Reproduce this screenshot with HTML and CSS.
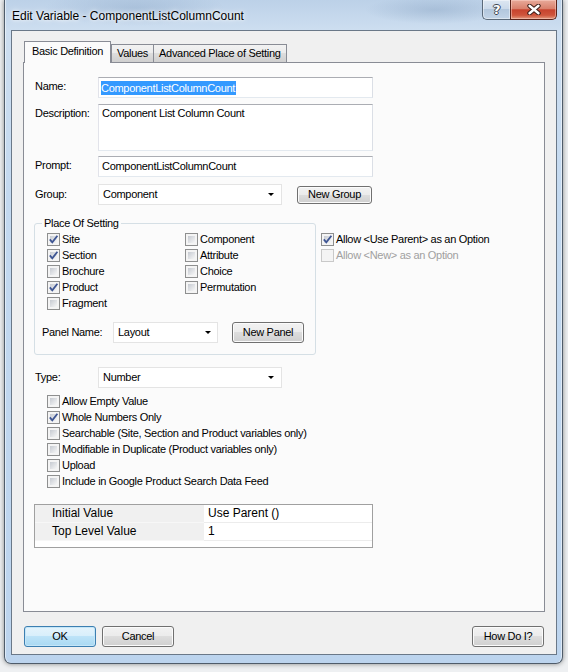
FILE: index.html
```html
<!DOCTYPE html>
<html>
<head>
<meta charset="utf-8">
<title>Edit Variable</title>
<link rel="stylesheet" href="styles.css">
</head>
<body>
<div class="window">
  <div class="titlebar">
    <span class="title">Edit Variable - ComponentListColumnCount</span>
    <div class="caption">
      <div class="cap-btn help"><span>?</span></div>
      <div class="cap-btn close">
        <svg width="14" height="11" viewBox="0 0 14 11"><path d="M2.5 1.8 L11.5 9.2 M11.5 1.8 L2.5 9.2" stroke="#3b1c16" stroke-width="4.4" stroke-linecap="round" fill="none"/><path d="M2.5 1.8 L11.5 9.2 M11.5 1.8 L2.5 9.2" stroke="#ffffff" stroke-width="2.4" stroke-linecap="round" fill="none"/></svg>
      </div>
    </div>
  </div>
  <div class="client">
    <div class="tabs">
      <div class="tab active">Basic Definition</div>
      <div class="tab">Values</div>
      <div class="tab">Advanced Place of Setting</div>
    </div>
    <div class="panel">
      <div class="row row-name">
        <span class="lbl">Name:</span>
        <div class="textbox"><span class="sel">ComponentListColumnCount</span></div>
      </div>
      <div class="row row-desc">
        <span class="lbl">Description:</span>
        <div class="textbox textarea">Component List Column Count</div>
      </div>
      <div class="row row-prompt">
        <span class="lbl">Prompt:</span>
        <div class="textbox">ComponentListColumnCount</div>
      </div>
      <div class="row row-combo row-group">
        <span class="lbl">Group:</span>
        <div class="combo combo-wide"><span>Component</span><i class="arrow"></i></div>
        <button class="btn btn-newgroup">New Group</button>
      </div>

      <div class="place-row">
        <fieldset class="groupbox">
          <legend>Place Of Setting</legend>
          <div class="cb-grid">
            <div class="cb-row"><span class="cb"><svg viewBox="0 0 11 11"><path d="M1.8 5.4 L4.3 8.3 L9.4 1.8" stroke="#3e5593" stroke-width="1.8" fill="none"/></svg></span>Site</div>
            <div class="cb-row"><span class="cb"><svg viewBox="0 0 11 11"><path d="M1.8 5.4 L4.3 8.3 L9.4 1.8" stroke="#3e5593" stroke-width="1.8" fill="none"/></svg></span>Section</div>
            <div class="cb-row"><span class="cb"></span>Brochure</div>
            <div class="cb-row"><span class="cb"><svg viewBox="0 0 11 11"><path d="M1.8 5.4 L4.3 8.3 L9.4 1.8" stroke="#3e5593" stroke-width="1.8" fill="none"/></svg></span>Product</div>
            <div class="cb-row"><span class="cb"></span>Fragment</div>
            <div class="cb-row"><span class="cb"></span>Component</div>
            <div class="cb-row"><span class="cb"></span>Attribute</div>
            <div class="cb-row"><span class="cb"></span>Choice</div>
            <div class="cb-row"><span class="cb"></span>Permutation</div>
          </div>
          <div class="panel-row">
            <span class="lbl-panel">Panel Name:</span>
            <div class="combo combo-panel"><span>Layout</span><i class="arrow"></i></div>
            <button class="btn btn-newpanel">New Panel</button>
          </div>
        </fieldset>
        <div class="allow-col">
          <div class="cb-row"><span class="cb"><svg viewBox="0 0 11 11"><path d="M1.8 5.4 L4.3 8.3 L9.4 1.8" stroke="#3e5593" stroke-width="1.8" fill="none"/></svg></span>Allow &lt;Use Parent&gt; as an Option</div>
          <div class="cb-row disabled"><span class="cb"></span>Allow &lt;New&gt; as an Option</div>
        </div>
      </div>

      <div class="row row-combo row-type">
        <span class="lbl">Type:</span>
        <div class="combo combo-wide"><span>Number</span><i class="arrow"></i></div>
      </div>

      <div class="options">
        <div class="cb-row"><span class="cb"></span>Allow Empty Value</div>
        <div class="cb-row"><span class="cb"><svg viewBox="0 0 11 11"><path d="M1.8 5.4 L4.3 8.3 L9.4 1.8" stroke="#3e5593" stroke-width="1.8" fill="none"/></svg></span>Whole Numbers Only</div>
        <div class="cb-row"><span class="cb"></span>Searchable (Site, Section and Product variables only)</div>
        <div class="cb-row"><span class="cb"></span>Modifiable in Duplicate (Product variables only)</div>
        <div class="cb-row"><span class="cb"></span>Upload</div>
        <div class="cb-row"><span class="cb"></span>Include in Google Product Search Data Feed</div>
      </div>

      <div class="grid">
        <div class="g-label">Initial Value</div>
        <div class="g-value">Use Parent ()</div>
        <div class="g-label">Top Level Value</div>
        <div class="g-value">1</div>
      </div>
    </div>

    <div class="buttons">
      <button class="btn btn-dlg default">OK</button>
      <button class="btn btn-dlg btn-cancel">Cancel</button>
      <button class="btn btn-dlg btn-how">How Do I?</button>
    </div>
  </div>
</div>
</body>
</html>
```

FILE: styles.css
```css
* { box-sizing: border-box; }

html, body {
  margin: 0;
  padding: 0;
}

body {
  width: 568px;
  height: 672px;
  overflow: hidden;
  background: #eef0f2;
  font-family: "Liberation Sans", Arial, sans-serif;
  font-size: 11px;
  line-height: 13px;
  letter-spacing: -0.3px;
  color: #000;
}

/* ---------- window frame ---------- */
.window {
  margin-left: 4px;
  width: 559px;
  height: 664px;
  border: 1px solid #4f5c6a;
  border-top: none;
  border-radius: 0 0 7px 7px;
  padding: 0 5px 8px 6px;
  background:
    radial-gradient(ellipse 90px 18px at 130px 8px, rgba(120,150,185,0.3), rgba(120,150,185,0)),
    radial-gradient(ellipse 70px 14px at 430px 10px, rgba(110,140,175,0.3), rgba(110,140,175,0)),
    linear-gradient(to bottom, #bcd1e8 0px, #cddef0 30px, #c3d9f0 200px, #bcd4ee 100%);
  box-shadow: 0 0 5px rgba(0,0,0,0.45), inset 1px 0 0 rgba(255,255,255,0.5), inset -1px 0 0 rgba(255,255,255,0.5);
  display: flex;
  flex-direction: column;
}

.titlebar {
  height: 30px;
  display: flex;
  align-items: flex-start;
  flex: none;
}

.title {
  margin-top: 9px;
  padding-left: 1px;
  font-size: 12px;
  line-height: 14px;
  letter-spacing: 0;
  color: #000;
  text-shadow: 0 0 6px rgba(255,255,255,0.95), 0 0 3px rgba(255,255,255,0.9);
}

.caption {
  margin-left: auto;
  display: flex;
}

.cap-btn {
  height: 20px;
  display: flex;
  align-items: center;
  justify-content: center;
  border: 1px solid #5b6a7a;
  border-top: none;
}

.help {
  width: 28px;
  border-right: none;
  border-radius: 0 0 0 5px;
  background: linear-gradient(to bottom, #dde7f2 0%, #ccdaea 45%, #b3c7dd 50%, #c2d4e7 100%);
  box-shadow: inset 0 0 0 1px rgba(255,255,255,0.45);
}

.help span {
  font-family: "DejaVu Sans", sans-serif;
  font-weight: bold;
  font-size: 13px;
  line-height: 14px;
  color: #fff;
  text-shadow: 1px 0 0 #3c4650, -1px 0 0 #3c4650, 0 1px 0 #3c4650, 0 -1px 0 #3c4650;
}

.close {
  width: 47px;
  border-color: #5a231a;
  border-radius: 0 0 5px 0;
  background: linear-gradient(to bottom, #e8aa9a 0%, #d9816d 45%, #c7432e 52%, #cf553c 80%, #e39a7f 100%);
  box-shadow: inset 0 0 0 1px rgba(255,220,210,0.45);
}

.close svg { display: block; }

.client {
  flex: none;
  height: 625px;
  border: 1px solid #6a7888;
  background: #f0f0f0;
  padding: 10px 11px 0 11px;
  display: flex;
  flex-direction: column;
}

/* ---------- tabs ---------- */
.tabs {
  height: 21px;
  display: flex;
  align-items: flex-end;
  padding-left: 1px;
  position: relative;
  z-index: 1;
}

.tab {
  height: 18px;
  line-height: 16px;
  padding: 0 5px;
  border: 1px solid #898c95;
  border-bottom: none;
  margin-left: -1px;
  background: linear-gradient(to bottom, #f2f2f2 0%, #ebebeb 50%, #dddddd 50%, #cfcfcf 100%);
  white-space: nowrap;
}

.tab.active {
  height: 22px;
  line-height: 19px;
  margin-left: 0;
  margin-bottom: -1px;
  padding: 0 7px 0 7px;
  background: #fbfbfb;
  position: relative;
  z-index: 2;
}

.tab.active + .tab { margin-left: 0; }

.panel {
  height: 550px;
  border: 1px solid #898c95;
  background: #fbfbfb;
  padding: 14px 0 0 11px;
}

/* ---------- form rows ---------- */
.row {
  display: flex;
  align-items: flex-start;
}

.lbl {
  width: 63px;
  flex: none;
  padding-top: 3px;
}

.row-combo { align-items: center; }
.row-combo .lbl { padding-top: 0; }

.row-desc { margin-top: 6px; }
.row-prompt { margin-top: 5px; }
.row-group { margin-top: 7px; }

.textbox {
  width: 275px;
  height: 21px;
  border: 1px solid;
  border-color: #abadb3 #dbdfe6 #e3e9ef #e2e3ea;
  background: #fff;
  padding: 0 3px;
  display: flex;
  align-items: center;
  white-space: nowrap;
}

.sel {
  background: #3399ff;
  color: #fff;
  line-height: 14px;
  padding: 0 1px 0 0;
  margin-left: -1px;
}

.textarea {
  height: 47px;
  align-items: flex-start;
  padding-top: 2px;
}

.combo {
  height: 21px;
  border: 1px solid #e4e4e4;
  background: #fff;
  display: flex;
  align-items: center;
  padding: 0 0 0 4px;
  position: relative;
}

.combo-wide { width: 184px; }

.arrow {
  margin-left: auto;
  margin-right: 7px;
  width: 0;
  height: 0;
  border-left: 3px solid transparent;
  border-right: 3px solid transparent;
  border-top: 3px solid #000;
}

/* ---------- buttons ---------- */
.btn {
  font: inherit;
  letter-spacing: inherit;
  color: #000;
  height: 21px;
  padding: 0;
  border: 1px solid #707070;
  border-radius: 3px;
  background: linear-gradient(to bottom, #f2f2f2 0%, #ebebeb 50%, #dddddd 50%, #cfcfcf 100%);
  box-shadow: inset 0 0 0 1px #fbfbfb;
  flex: none;
}

.btn-newgroup {
  width: 75px;
  height: 18px;
  margin-left: 15px;
}

.btn-newpanel {
  width: 72px;
  margin-left: 14px;
}

/* ---------- place of setting ---------- */
.place-row {
  display: flex;
  align-items: flex-start;
  margin-top: 12px;
}

.groupbox {
  margin: 0 0 0 -1px;
  width: 282px;
  border: 1px solid #d5dfe5;
  border-radius: 3px;
  padding: 1px 0 11px 0;
  min-width: 0;
}

.groupbox legend {
  padding: 0 2px;
  margin-left: 7px;
  line-height: 13px;
}

.cb-grid {
  display: grid;
  grid-template-columns: 138px auto;
  grid-template-rows: repeat(5, 16px);
  grid-auto-flow: column;
  padding-left: 12px;
}

.cb-row {
  display: flex;
  align-items: center;
  height: 16px;
  white-space: nowrap;
}

.cb {
  width: 13px;
  height: 13px;
  flex: none;
  margin-right: 2px;
  border: 1px solid #8e8f8f;
  padding: 2px;
  background: linear-gradient(135deg, #c6cad1 0%, #f7f7f7 100%) content-box, #f4f4f4;
}

.cb svg {
  display: block;
  width: 11px;
  height: 11px;
  margin: -2px;
}

.cb-row.disabled { color: #a0a0a0; }
.cb-row.disabled .cb {
  border-color: #c9c9c9;
  background: #f4f4f4;
}

.panel-row {
  display: flex;
  align-items: center;
  margin-top: 11px;
  padding-left: 7px;
}

.lbl-panel {
  width: 71px;
  flex: none;
}

.combo-panel { width: 105px; }
.combo-panel .arrow { margin-right: 6px; }

.allow-col {
  margin-left: 5px;
  padding-top: 14px;
}

/* ---------- type ---------- */
.row-type { margin-top: 12px; }

.options {
  margin-top: 5px;
  padding-left: 12px;
}

/* ---------- value grid ---------- */
.grid {
  margin: 15px 0 0 -1px;
  width: 339px;
  height: 44px;
  border: 1px solid #a0a0a0;
  background: #fff;
  display: grid;
  grid-template-columns: 169px 1fr;
  grid-template-rows: 18px 18px;
  font-size: 12px;
  letter-spacing: 0;
}

.g-label {
  background: #f0f0f0;
  padding-left: 17px;
  line-height: 17px;
  border-bottom: 1px solid #f7f7f7;
}

.g-value {
  padding-left: 4px;
  line-height: 17px;
  border-bottom: 1px solid #ececec;
}

/* ---------- dialog buttons ---------- */
.buttons {
  display: flex;
  margin-top: 14px;
  padding: 0 1px;
}

.btn-dlg { width: 72px; }

.btn.default {
  border-color: #3c7fb1;
  background: linear-gradient(to bottom, #e5f4fc 0%, #d7eefb 50%, #bde3f8 50%, #a9d9f3 100%);
  box-shadow: inset 0 0 0 1px #c5e6f8;
}

.btn-cancel { margin-left: 6px; }
.btn-how { margin-left: auto; }
```
